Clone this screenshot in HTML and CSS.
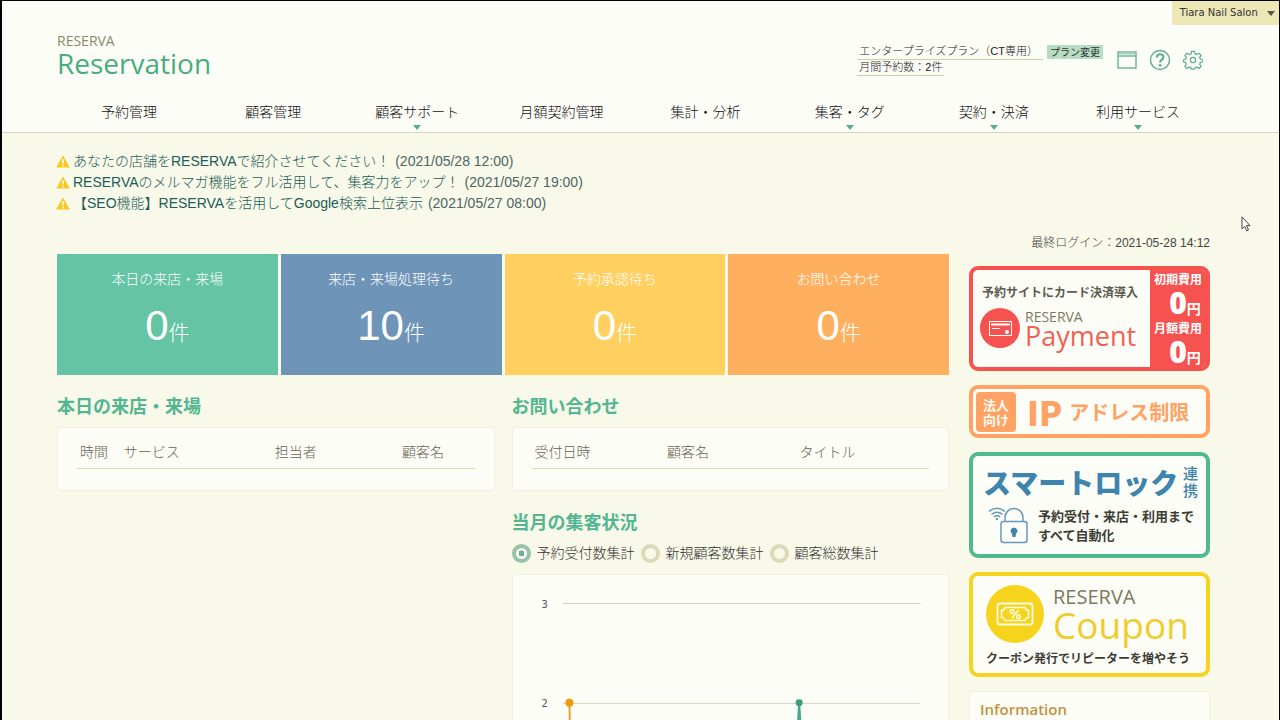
FILE: index.html
```html
<!DOCTYPE html>
<html lang="ja">
<head>
<meta charset="utf-8">
<meta name="viewport" content="width=device-width, initial-scale=1">
<title>RESERVA Reservation</title>
<link rel="stylesheet" href="styles.css">
</head>
<body>
<header class="header">
  <button class="account" type="button">Tiara Nail Salon <span class="caret"></span></button>
  <div class="topbar">
    <a class="logo" href="#"><span class="logo-brand">RESERVA</span><span class="logo-name">Reservation</span></a>
    <div class="tools">
      <div class="plan">
        <span class="plan-line wide">エンタープライズプラン（CT専用）</span>
        <span class="plan-line">月間予約数：2件</span>
      </div>
      <button class="plan-change" type="button">プラン変更</button>
      <a class="tool" href="#" aria-label="サイト表示">
        <svg width="20" height="20" viewBox="0 0 20 20"><path d="M1 2h18v16H1z" fill="none" stroke="#72b79b" stroke-width="1.5"/><path d="M1 6h18" stroke="#72b79b" stroke-width="1.5"/><path d="M2 3.5h16" stroke="#a9d2bd" stroke-width="2"/></svg>
      </a>
      <a class="tool" href="#" aria-label="ヘルプ">
        <svg width="22" height="22" viewBox="0 0 22 22"><g fill="none" stroke="#5eae90"><circle cx="11" cy="11" r="9.5" stroke-width="1.4"/><path d="M7.8 8.6c0-4.4 6.6-4.4 6.6-.5 0 2.6-3.3 2.5-3.3 5.4" stroke-width="2.2"/></g><circle cx="11.1" cy="16.3" r="1.4" fill="#5eae90"/></svg>
      </a>
      <a class="tool" href="#" aria-label="設定">
        <svg width="20" height="20" viewBox="0 0 24 24"><g fill="none" stroke="#5eae90" stroke-width="1.5" stroke-linejoin="round"><circle cx="12" cy="12" r="3.1"/><path d="M10.2 1.6h3.6l.6 3 2.2.9 2.5-1.7 2.6 2.6-1.7 2.5.9 2.2 3 .6v2.6l-3 .6-.9 2.2 1.7 2.5-2.6 2.6-2.5-1.7-2.2.9-.6 1.5h-3.6l-.6-1.5-2.2-.9-2.5 1.7-2.6-2.6L4 17.100l-.9-2.200-2.500-.6v-2.600l2.500-.6.9-2.200-1.700-2.500 2.600-2.600 2.500 1.700 2.200-.9z"/></g></svg>
      </a>
    </div>
  </div>
  <nav class="nav">
    <a href="#">予約管理</a>
    <a href="#">顧客管理</a>
    <a class="has-menu" href="#">顧客サポート</a>
    <a href="#">月額契約管理</a>
    <a href="#">集計・分析</a>
    <a class="has-menu" href="#">集客・タグ</a>
    <a class="has-menu" href="#">契約・決済</a>
    <a class="has-menu" href="#">利用サービス</a>
  </nav>
</header>

<main class="main">
  <ul class="notices">
    <li><svg class="warn" width="14" height="13" viewBox="0 0 14 13"><path d="M7 .5 13.800 12.500H.2z" fill="#f8c81c"/><path d="M7 4.200v4.300M7 9.800v1.500" stroke="#fff" stroke-width="1.500"/></svg><a href="#">あなたの店舗をRESERVAで紹介させてください！</a><time>(2021/05/28 12:00)</time></li>
    <li><svg class="warn" width="14" height="13" viewBox="0 0 14 13"><path d="M7 .5 13.800 12.500H.2z" fill="#f8c81c"/><path d="M7 4.200v4.300M7 9.800v1.500" stroke="#fff" stroke-width="1.500"/></svg><a href="#">RESERVAのメルマガ機能をフル活用して、集客力をアップ！</a><time>(2021/05/27 19:00)</time></li>
    <li><svg class="warn" width="14" height="13" viewBox="0 0 14 13"><path d="M7 .5 13.800 12.500H.2z" fill="#f8c81c"/><path d="M7 4.200v4.300M7 9.800v1.500" stroke="#fff" stroke-width="1.500"/></svg><a href="#">【SEO機能】RESERVAを活用してGoogle検索上位表示</a><time>(2021/05/27 08:00)</time></li>
  </ul>

  <div class="columns">
    <div class="content">
      <div class="cards">
        <a class="card green" href="#"><span>本日の来店・来場</span><strong>0<small>件</small></strong></a>
        <a class="card blue" href="#"><span>来店・来場処理待ち</span><strong>10<small>件</small></strong></a>
        <a class="card yellow" href="#"><span>予約承認待ち</span><strong>0<small>件</small></strong></a>
        <a class="card orange" href="#"><span>お問い合わせ</span><strong>0<small>件</small></strong></a>
      </div>
      <div class="panels">
        <section>
          <h2>本日の来店・来場</h2>
          <div class="box">
            <table class="visits">
              <thead><tr><th class="time">時間</th><th class="service">サービス</th><th class="staff">担当者</th><th>顧客名</th></tr></thead>
            </table>
          </div>
        </section>
        <div class="stack">
          <section>
            <h2>お問い合わせ</h2>
            <div class="box">
              <table>
                <thead><tr><th>受付日時</th><th>顧客名</th><th>タイトル</th></tr></thead>
              </table>
            </div>
          </section>
          <section>
            <h2>当月の集客状況</h2>
            <div class="radios">
              <label><input type="radio" name="stat" checked>予約受付数集計</label>
              <label><input type="radio" name="stat">新規顧客数集計</label>
              <label><input type="radio" name="stat">顧客総数集計</label>
            </div>
            <div class="chart">
              <svg viewBox="0 0 436 340" role="img" aria-label="予約受付数集計グラフ">
                <path d="M50 28.500H408M50 128.500H408M50 228.500H408M50 328.500H408" stroke="#d2d2bd"/>
                <g class="axis"><text x="35" y="33">3</text><text x="35" y="132">2</text><text x="35" y="232">1</text><text x="35" y="332">0</text></g>
                <path d="M56.500 128 60 328" fill="none" stroke="#e0a62c" stroke-width="2"/>
                <path d="M274 328 286.500 128 299 328" fill="none" stroke="#4da78b" stroke-width="2"/>
                <circle cx="56.500" cy="128" r="4" fill="#f29a0c"/>
                <circle cx="286.500" cy="128" r="3.500" fill="#3a9d78"/>
              </svg>
            </div>
          </section>
        </div>
      </div>
    </div>

    <aside class="side">
      <p class="login">最終ログイン：2021-05-28 14:12</p>
      <a class="banner payment" href="#">
        <span class="pay-main">
          <span class="pay-copy">予約サイトにカード決済導入</span>
          <span class="pay-row">
            <svg width="40" height="40" viewBox="0 0 40 40"><circle cx="20" cy="20" r="20" fill="#f65250"/><g fill="none" stroke="#fff"><rect x="9.500" y="13.500" width="22" height="14"/><path d="M11 16.500h19" stroke-width="2"/><path d="M12 20.500h8"/></g><circle cx="27" cy="24" r="2" fill="#fff"/></svg>
            <span class="product"><span class="brand">RESERVA</span><span class="name">Payment</span></span>
          </span>
        </span>
        <span class="pay-fees"><span>初期費用</span><b>0<i>円</i></b><span>月額費用</span><b>0<i>円</i></b></span>
      </a>
      <a class="banner ip" href="#">
        <span class="ip-tag">法人<br>向け</span><span class="ip-big">IP</span><span class="ip-text">アドレス制限</span>
      </a>
      <a class="banner lock" href="#">
        <span class="lock-title"><span class="lock-name">スマートロック</span><span class="lock-link">連<br>携</span></span>
        <span class="lock-row">
          <svg width="42" height="38" viewBox="0 0 42 38"><g fill="none" stroke="#6698bf" stroke-width="1.500"><rect x="13" y="15.500" width="26" height="21" rx="2.500"/><path d="M17 15v-3.500a9 9 0 0 1 18 0V15"/><path d="M1 5.500q8-6.500 16 0M3.500 8.500q5.500-4.500 11 0M6 11q3-2.500 6 0"/></g><circle cx="9" cy="13" r="1.200" fill="#6698bf"/><path d="M26 21.500a3.500 3.500 0 0 1 2 6.300L27.500 31h-3l-.5-3.200a3.500 3.500 0 0 1 2-6.300z" fill="#3d84ae"/></svg>
          <span>予約受付・来店・利用まで<br>すべて自動化</span>
        </span>
      </a>
      <a class="banner coupon" href="#">
        <span class="coupon-row">
          <svg width="58" height="58" viewBox="0 0 58 58"><circle cx="29" cy="29" r="29" fill="#f6d31c"/><g fill="none" stroke="#fffce4"><rect x="11.500" y="18.500" width="35" height="21" rx="2.500" stroke-width="1.800"/><path d="M19 22.500h20q1 3 3.500 3v7q-3 0-3.500 3H19q-1-3-3.500-3v-7q3 0 3.500-3z" stroke-width="1.600"/><circle cx="26" cy="26.500" r="1.800" stroke-width="1.500"/><circle cx="32.500" cy="31.500" r="1.800" stroke-width="1.500"/><path d="m32.500 25-6.500 8" stroke-width="1.500"/></g></svg>
          <span class="product"><span class="brand">RESERVA</span><span class="name">Coupon</span></span>
        </span>
        <span class="coupon-copy">クーポン発行でリピーターを増やそう</span>
      </a>
      <section class="info"><h3>Information</h3></section>
    </aside>
  </div>
</main>
<svg class="pointer" width="10" height="16" viewBox="0 0 10 16"><path d="M1 .8v12l2.700-2.500 2 4.500 1.800-.8-2-4.400H9z" fill="#fff" stroke="#444"/></svg>
</body>
</html>
```
FILE: styles.css
```css
* { box-sizing: border-box; }
html { background: #f9f9e9; scrollbar-width: none; }
body {
  margin: 0;
  position: relative;
  border: solid #000;
  border-width: 1px 1px 0 2px;
  color: #555;
  font: 300 14px/20px "Liberation Sans", "Noto Sans CJK JP", sans-serif;
}
a { color: inherit; text-decoration: none; }
button { border: 0; color: #333; cursor: pointer; }
h2, h3, p, ul { margin: 0; padding: 0; }

.header { background: #fdfdf8; border-bottom: 1px solid #d6d6c4; }
.account {
  position: absolute;
  top: 0;
  right: 0;
  height: 24px;
  padding: 0 4px 2px 8px;
  background: #ede7b6;
  font: 10px "DejaVu Sans", sans-serif;
}
.caret {
  display: inline-block;
  margin-left: 6px;
  border: 4px solid transparent;
  border-top: 5px solid #555;
  border-bottom: 0;
}
.topbar {
  display: flex;
  justify-content: space-between;
  align-items: flex-start;
  height: 93px;
  padding: 32px 76px 0 55px;
}
.logo { display: flex; flex-direction: column; font-family: "Open Sans", "Noto Sans", sans-serif; font-weight: 500; }
.logo-brand { font-size: 14px; line-height: 16px; color: #8a8a68; }
.logo-name { font-size: 28px; line-height: 28px; color: #48ac7c; }
.tools { display: flex; align-items: flex-start; padding-top: 11px; }
.plan { display: flex; flex-direction: column; align-items: flex-start; color: #222; font-size: 11px; line-height: 15px; }
.plan-line { padding: 0 2px; border-bottom: 1px solid #c5d5a8; }
.plan-line.wide { padding-right: 5px; }
.plan-change {
  height: 14px;
  margin: 1px 14px 0 4px;
  padding: 0 3px;
  background: #b6dcc4;
  font: 10px/14px "Noto Sans CJK JP", sans-serif;
}
.tool { height: 22px; margin: 5px 12px 0 0; display: flex; align-items: center; }
.tool:last-child { margin-right: 0; }

.nav { display: flex; height: 38px; padding: 0 69px 0 55px; }
.nav a { position: relative; flex: 1; padding-top: 8px; text-align: center; color: #111; }
.has-menu::after {
  content: "";
  position: absolute;
  left: 50%;
  top: 31px;
  margin-left: -4px;
  border: 4px solid transparent;
  border-top: 5px solid #58ae88;
  border-bottom: 0;
}

.main { padding: 18px 69px 0 55px; }
.notices { list-style: none; color: #4c6566; line-height: 21px; }
.notices li { display: flex; align-items: center; height: 21px; }
.notices a { color: #205c58; }
.warn { margin: 0 3px 0 -1px; }
.notices time { margin-left: 5px; }

.columns { display: grid; grid-template-columns: 1fr 241px; gap: 20px; margin-top: 20px; }
.content { padding-top: 20px; min-width: 0; }
.cards { display: grid; grid-template-columns: repeat(4, 1fr); gap: 3px; }
.card { display: flex; flex-direction: column; align-items: center; height: 121px; padding-top: 15px; color: #fff; }
.card strong { margin-top: 12px; font-size: 42px; font-weight: 400; line-height: 50px; }
.card small { font-size: 21px; font-weight: 300; }
.green { background: #64c4a4; }
.blue { background: #6e94b8; }
.yellow { background: #ffd05f; }
.orange { background: #ffb05f; }

.panels { display: grid; grid-template-columns: 1fr 1fr; gap: 17px; padding-top: 18px; }
h2 { margin-bottom: 10px; color: #53b693; font: bold 18px/24px "Noto Sans CJK JP", sans-serif; }
.stack { display: flex; flex-direction: column; gap: 18px; }
.box { height: 64px; padding: 12px 19px; background: #fdfdf8; border: 1px solid #f0efdc; border-radius: 3px; }
table { width: 100%; table-layout: fixed; border-collapse: collapse; }
th { height: 28px; padding: 0 3px 3px; border-bottom: 1px solid #dcdcb0; color: #666352; font-weight: 300; text-align: left; }
.time { width: 11%; }
.service { width: 38%; }
.staff { width: 32%; }

.radios { display: flex; gap: 6px; color: #333; }
.radios label { display: flex; align-items: center; gap: 6px; }
.radios input { appearance: none; width: 19px; height: 19px; margin: 0; border: 4px solid #dadab8; border-radius: 50%; }
.radios input:checked { border-color: #97c3aa; background: radial-gradient(circle, #6fb093 0 3px, #fdfdf8 3px); }
.chart { margin-top: 11px; background: #fdfdf8; border: 1px solid #f0efdc; border-radius: 3px; }
.chart svg { display: block; width: 100%; }
.axis text { text-anchor: end; fill: #555; font: 10px "DejaVu Sans", sans-serif; }

.side { display: flex; flex-direction: column; gap: 14px; }
.login { height: 18px; color: #444; font-size: 12px; line-height: 18px; text-align: right; white-space: nowrap; }
.banner { display: flex; overflow: hidden; border: 4px solid; border-radius: 9px; background: #fdfdf8; font-family: "Noto Sans CJK JP", sans-serif; font-weight: bold; white-space: nowrap; }
.product { display: flex; flex-direction: column; font-family: "Open Sans", "Noto Sans", sans-serif; font-weight: 400; }
.brand { color: #7b7960; }
.payment { height: 105px; border-color: #f65250; }
.pay-main { flex: 1; padding: 13px 0 0 9px; }
.pay-copy { display: block; color: #5c5b4d; font-size: 12px; line-height: 18px; }
.pay-row { display: flex; align-items: center; gap: 5px; padding-top: 7px; }
.pay-row svg { margin-left: -2px; }
.pay-row .brand { font-size: 14px; line-height: 16px; }
.pay-row .name { color: #ee6255; font-size: 27px; line-height: 22px; }
.pay-fees { display: flex; flex-direction: column; align-items: center; width: 56px; background: #f65250; color: #fff; font-size: 12px; line-height: 18px; }
.pay-fees b { height: 31px; padding-left: 14px; font: 800 30px/30px "Open Sans", sans-serif; }
.pay-fees i { font: bold 14px/14px "Noto Sans CJK JP", sans-serif; }
.ip { height: 53px; align-items: center; padding-left: 3px; border-color: #ffa263; color: #ffa263; }
.ip-tag { width: 40px; height: 40px; padding-top: 5px; border-radius: 4px; background: #ffa263; color: #fdfdf8; font-size: 13px; line-height: 15px; text-align: center; }
.ip-big { margin: 0 7px 0 11px; font-size: 34px; font-weight: 900; }
.ip-text { font-size: 20px; }
.lock { flex-direction: column; height: 106px; padding: 8px 8px 0 10px; border-color: #52b891; }
.lock-title { display: flex; justify-content: space-between; color: #3d84ae; }
.lock-name { font-size: 28px; line-height: 36px; font-weight: 900; }
.lock-link { font-size: 15px; line-height: 17px; font-weight: 500; }
.lock-row { display: flex; align-items: center; gap: 8px; margin-top: 6px; color: #3d3d35; font-size: 13px; line-height: 19px; }
.lock-row svg { margin-left: 5px; }
.coupon { flex-direction: column; height: 105px; padding: 8px 0 0 13px; border-color: #f6d31c; }
.coupon-row { display: flex; align-items: center; gap: 9px; height: 60px; }
.coupon-row .brand { font-size: 20px; line-height: 22px; }
.coupon-row .name { color: #f0cc2e; font-size: 37px; line-height: 34px; }
.coupon-copy { margin-top: 4px; color: #3d3d35; font-size: 12px; line-height: 20px; }
.info { height: 160px; padding: 7px 10px; border: 1px solid #f0efdc; border-radius: 3px; background: #fdfdf8; }
.info h3 { color: #c2923c; font: 600 15px/20px "Open Sans", sans-serif; }

.pointer { position: absolute; left: 1239px; top: 215px; }
```
